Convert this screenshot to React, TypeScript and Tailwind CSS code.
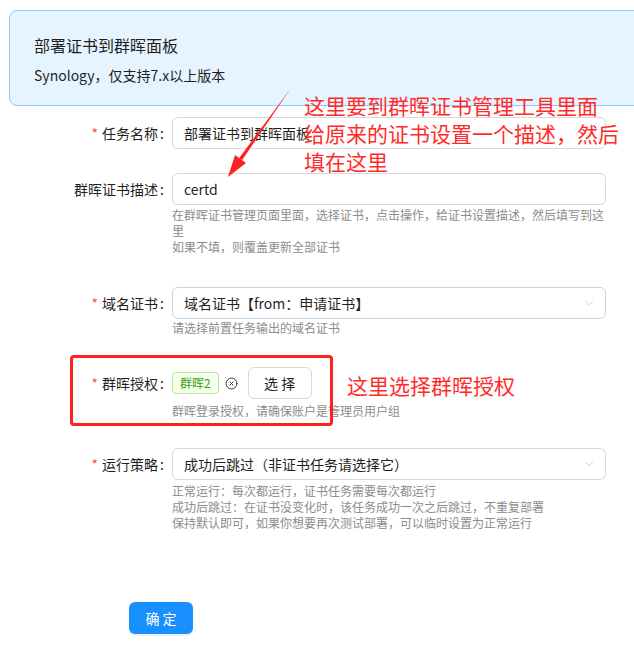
import { ChevronDown, CircleX } from 'lucide-react'

const font = "font-['Noto_Sans_CJK_SC','Noto_Sans',sans-serif]"

interface FieldLabelProps {
  text: string
  required?: boolean
}

const FieldLabel = ({ text, required }: FieldLabelProps) => (
  <div className="flex h-8 w-[164px] shrink-0 items-center justify-end text-sm text-[#1f1f1f]">
    {required && <span className="mr-1 text-[#ff4d4f]">*</span>}
    <span>{text}</span>
    <span className="ml-[2px]">:</span>
  </div>
)

const Help = ({ lines, className }: { lines: string[]; className?: string }) => (
  <div className={`w-[434px] text-xs leading-4 text-[#8c8c8c] ${className ?? ''}`}>
    {lines.map((line, idx) => (
      <div key={idx}>{line}</div>
    ))}
  </div>
)

const Select = ({ value, borderClass }: { value: string; borderClass: string }) => (
  <div
    className={`flex h-8 w-[434px] items-center rounded-md border bg-white pl-[11px] pr-[9px] text-sm text-[#1f1f1f] ${borderClass}`}
  >
    <span className="flex-1">{value}</span>
    <ChevronDown size={14} strokeWidth={1.3} className="text-[#bfbfbf]" />
  </div>
)

export default function App() {
  return (
    <div className={`relative h-[648px] w-[634px] overflow-hidden bg-white ${font}`}>
      {/* alert */}
      <div className="ml-[9px] mt-[10px] w-[640px] rounded-lg border border-[#91caff] bg-[#e6f4ff] pb-[19px] pl-[24px] pt-[22px]">
        <div className="text-base leading-6 text-[#1f1f1f]">部署证书到群晖面板</div>
        <div className="mt-[7px] text-sm leading-[22px] text-[#1f1f1f]">Synology，仅支持7.x以上版本</div>
      </div>

      {/* task name */}
      <div className="mt-[11px] flex">
        <FieldLabel text="任务名称" required />
        <div className="ml-2">
          <div className="flex h-8 w-[434px] items-center rounded-md border border-[#d9d9d9] px-[11px] text-sm text-[#1f1f1f]">
            部署证书到群晖面板
          </div>
        </div>
      </div>

      {/* cert description */}
      <div className="mt-6 flex">
        <FieldLabel text="群晖证书描述" />
        <div className="ml-2">
          <div className="flex h-8 w-[434px] items-center rounded-md border border-[#d9d9d9] px-[11px] text-sm text-[#1f1f1f]">
            certd
          </div>
          <Help
            className="mt-[2px]"
            lines={[
              '在群晖证书管理页面里面，选择证书，点击操作，给证书设置描述，然后填写到这里',
              '如果不填，则覆盖更新全部证书',
            ]}
          />
        </div>
      </div>

      {/* domain cert */}
      <div className="mt-8 flex">
        <FieldLabel text="域名证书" required />
        <div className="ml-2">
          <Select value="域名证书【from：申请证书】" borderClass="border-[#c4d4e4]" />
          <Help className="mt-[1px]" lines={['请选择前置任务输出的域名证书']} />
        </div>
      </div>

      {/* access */}
      <div className="mt-[31px] flex">
        <FieldLabel text="群晖授权" required />
        <div className="ml-2">
          <div className="flex h-8 items-center">
            <span className="flex h-[22px] items-center rounded border border-[#b7eb8f] bg-[#f6ffed] px-[7px] text-xs text-[#389e0d]">
              群晖2
            </span>
            <CircleX size={13} strokeWidth={1.8} className="ml-[6px] text-[#333]" />
            <button className="ml-[10px] h-8 w-[64px] rounded-md border border-[#d9d9d9] bg-white text-sm text-[#1f1f1f]">
              选 择
            </button>
          </div>
          <Help className="mt-[4px]" lines={['群晖登录授权，请确保账户是管理员用户组']} />
        </div>
      </div>

      {/* strategy */}
      <div className="mt-[29px] flex">
        <FieldLabel text="运行策略" required />
        <div className="ml-2">
          <Select value="成功后跳过（非证书任务请选择它）" borderClass="border-[#d9d9d9]" />
          <Help
            className="mt-[3px]"
            lines={[
              '正常运行：每次都运行，证书任务需要每次都运行',
              '成功后跳过：在证书没变化时，该任务成功一次之后跳过，不重复部署',
              '保持默认即可，如果你想要再次测试部署，可以临时设置为正常运行',
            ]}
          />
        </div>
      </div>

      <div className="ml-[129px] mt-[71px]">
        <button className="h-8 w-16 rounded-md bg-[#1890ff] text-sm text-white shadow-[0_2px_0_rgba(5,145,255,0.1)]">
          确 定
        </button>
      </div>

      {/* annotations */}
      <svg className="pointer-events-none absolute left-0 top-0" width="634" height="648">
        <polygon points="291,88 242.2,159.9 239.2,158.1" fill="#ff2020" />
        <polygon points="228,177 246,163 235,155" fill="#ff2020" />
      </svg>
      <div className="absolute left-[304px] top-[91px] whitespace-nowrap text-[21px] leading-[28px] text-[#ff2b2b]">
        <div>这里要到群晖证书管理工具里面</div>
        <div>给原来的证书设置一个描述，然后</div>
        <div>填在这里</div>
      </div>
      <div className="absolute left-[70px] top-[355px] h-[71px] w-[263px] rounded-[4px] border-[3px] border-[#ff2020]" />
      <div className="absolute left-[347px] top-[371px] whitespace-nowrap text-[21px] leading-[28px] text-[#ff2b2b]">
        这里选择群晖授权
      </div>
    </div>
  )
}
